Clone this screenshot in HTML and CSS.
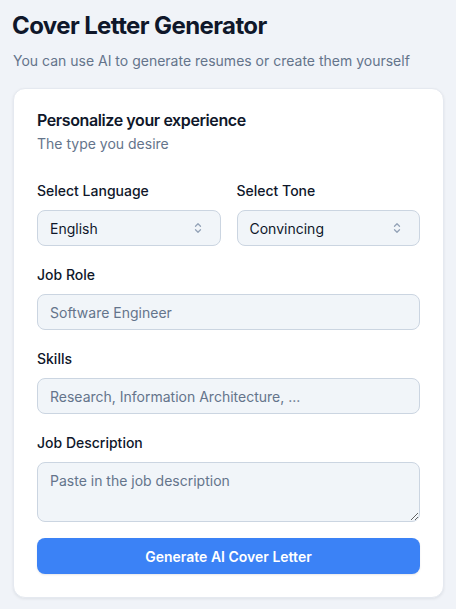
FILE: index.html
```html
<!DOCTYPE html>
<html lang="en">
<head>
<meta charset="utf-8">
<title>Cover Letter Generator</title>
<link rel="stylesheet" href="styles.css">
</head>
<body>
<main class="page">
  <h1 class="title">Cover Letter Generator</h1>
  <p class="lead">You can use AI to generate resumes or create them yourself</p>
  <section class="card">
    <h2 class="card-title">Personalize your experience</h2>
    <p class="card-sub">The type you desire</p>
    <div class="row">
      <div class="field">
        <label class="label">Select Language</label>
        <div class="select">
          <span>English</span>
          <svg class="chev" width="8" height="12" viewBox="0 0 8 12" fill="none" stroke="#94a3b8" stroke-width="1.3" stroke-linecap="round" stroke-linejoin="round"><path d="M1.5 4.2 4 1.7 6.5 4.2"/><path d="M1.5 7.8 4 10.3 6.5 7.8"/></svg>
        </div>
      </div>
      <div class="field">
        <label class="label">Select Tone</label>
        <div class="select">
          <span>Convincing</span>
          <svg class="chev" width="8" height="12" viewBox="0 0 8 12" fill="none" stroke="#94a3b8" stroke-width="1.3" stroke-linecap="round" stroke-linejoin="round"><path d="M1.5 4.2 4 1.7 6.5 4.2"/><path d="M1.5 7.8 4 10.3 6.5 7.8"/></svg>
        </div>
      </div>
    </div>
    <div class="field">
      <label class="label">Job Role</label>
      <input class="input" type="text" placeholder="Software Engineer">
    </div>
    <div class="field">
      <label class="label">Skills</label>
      <input class="input" type="text" placeholder="Research, Information Architecture, ...">
    </div>
    <div class="field">
      <label class="label">Job Description</label>
      <textarea class="input textarea" placeholder="Paste in the job description"></textarea>
    </div>
    <button class="btn" type="button">Generate AI Cover Letter</button>
  </section>
</main>
</body>
</html>
```

FILE: styles.css
```css
* { box-sizing: border-box; }
html, body { margin: 0; padding: 0; }
body {
  background: #f0f3f8;
  font-family: Inter, "Noto Sans", sans-serif;
  color: #0f172a;
}
.page {
  padding: 10px 12px 11px 13px;
}
.title {
  margin: 0 0 0 -1px;
  font-size: 24px;
  line-height: 32px;
  font-weight: 700;
  color: #0f172a;
  letter-spacing: -0.6px;
}
.lead {
  margin: 9px 0 17px 0;
  font-size: 14px;
  line-height: 20px;
  color: #64748b;
}
.card {
  background: #fff;
  border-radius: 12px;
  border: 1px solid #e5e9f0;
  box-shadow: 0 1px 3px rgba(15, 23, 42, 0.08);
  padding: 19px 23px 23px;
  display: flex;
  flex-direction: column;
}
.card-title {
  margin: 0;
  font-size: 16px;
  line-height: 24px;
  font-weight: 600;
  letter-spacing: -0.4px;
}
.card-sub {
  margin: 2px 0 0;
  font-size: 14px;
  line-height: 20px;
  color: #64748b;
}
.row {
  display: grid;
  grid-template-columns: 1fr 1fr;
  gap: 16px;
  margin-top: 27px;
}
.field {
  display: flex;
  flex-direction: column;
}
.card > .field { margin-top: 19px; }
.label {
  font-size: 14px;
  line-height: 20px;
  font-weight: 500;
  color: #0f172a;
  margin-bottom: 9px;
}
.select, .input {
  height: 36px;
  background: #f1f5f9;
  border: 1px solid #cbd5e1;
  border-radius: 8px;
  font-family: inherit;
  font-size: 14px;
  color: #0f172a;
  padding: 0 12px;
}
.select {
  display: flex;
  align-items: center;
  justify-content: space-between;
  padding-right: 18px;
}
.chev { display: block; }
.input::placeholder { color: #64748b; opacity: 1; }
.input { outline: none; width: 100%; }
.textarea {
  height: 60px;
  padding: 8px 12px;
  line-height: 20px;
  resize: vertical;
  display: block;
}
.btn {
  margin-top: 16px;
  height: 36px;
  border: 0;
  border-radius: 8px;
  background: #3b82f6;
  color: #fff;
  font-family: inherit;
  font-size: 14px;
  font-weight: 600;
  box-shadow: 0 1px 2px rgba(15, 23, 42, 0.1);
}
```
